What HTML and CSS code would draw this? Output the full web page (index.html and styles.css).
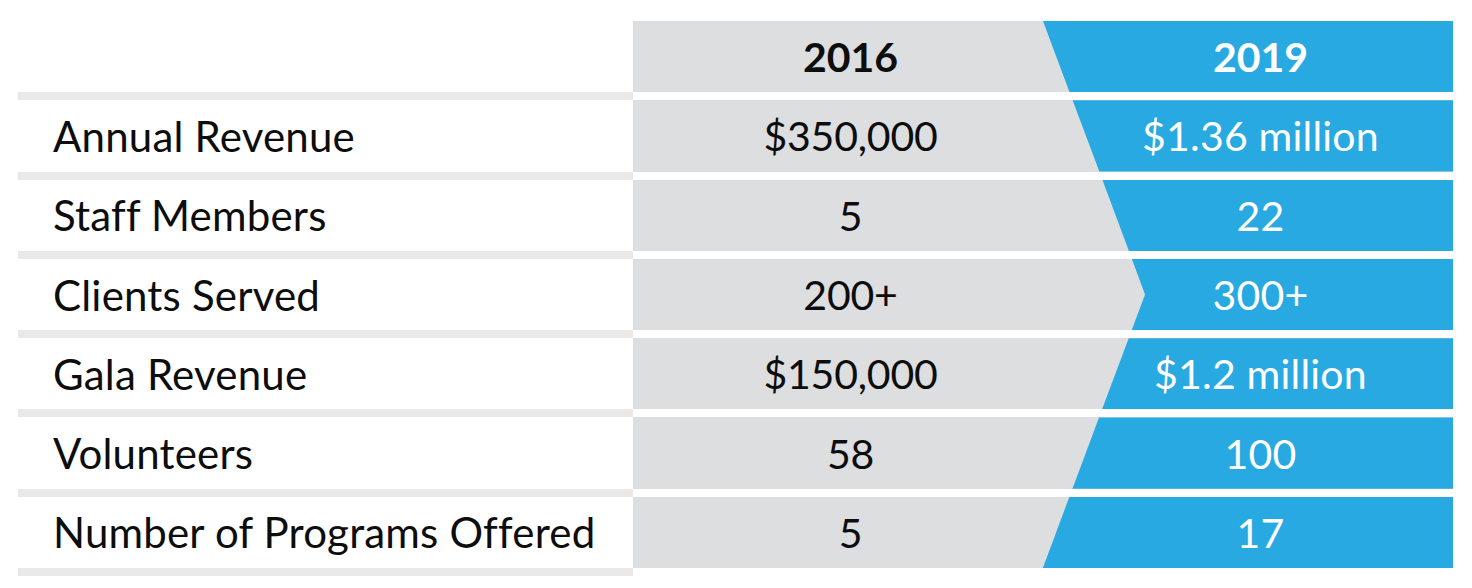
FILE: index.html
```html
<!DOCTYPE html>
<html lang="en">
<head>
<meta charset="utf-8">
<title>2016 vs 2019</title>
<link rel="stylesheet" href="styles.css">
</head>
<body>
<div class="table">
  <div class="row head">
    <div class="label"></div>
    <div class="values" style="--a:410px;--m:423.3px;--b:436.6px">
      <div class="cell y2016">2016</div>
      <div class="cell y2019">2019</div>
    </div>
  </div>
  <div class="body">
    <div class="row">
      <div class="label">Annual Revenue</div>
      <div class="values" style="--a:439.6px;--m:453px;--b:466.3px">
        <div class="cell y2016">$350,000</div>
        <div class="cell y2019">$1.36 million</div>
      </div>
    </div>
    <div class="row">
      <div class="label">Staff Members</div>
      <div class="values" style="--a:469.3px;--m:482.6px;--b:495.9px">
        <div class="cell y2016">5</div>
        <div class="cell y2019">22</div>
      </div>
    </div>
    <div class="row">
      <div class="label">Clients Served</div>
      <div class="values" style="--a:498.9px;--m:512px;--b:498.7px">
        <div class="cell y2016">200+</div>
        <div class="cell y2019">300+</div>
      </div>
    </div>
    <div class="row">
      <div class="label">Gala Revenue</div>
      <div class="values" style="--a:495.7px;--m:482.4px;--b:469px">
        <div class="cell y2016">$150,000</div>
        <div class="cell y2019">$1.2 million</div>
      </div>
    </div>
    <div class="row">
      <div class="label">Volunteers</div>
      <div class="values" style="--a:466px;--m:452.7px;--b:439.4px">
        <div class="cell y2016">58</div>
        <div class="cell y2019">100</div>
      </div>
    </div>
    <div class="row">
      <div class="label">Number of Programs Offered</div>
      <div class="values" style="--a:436.4px;--m:423.1px;--b:409.8px">
        <div class="cell y2016">5</div>
        <div class="cell y2019">17</div>
      </div>
    </div>
  </div>
</div>
</body>
</html>
```
FILE: styles.css
```css
html, body {
  margin: 0;
  padding: 0;
  background: #ffffff;
}

body {
  font-family: Lato, "Open Sans", sans-serif;
  color: #0d0d0d;
}

.table {
  margin: 21px 0 0 18px;
  width: 1435px;
  display: flex;
  flex-direction: column;
}

.body {
  display: flex;
  flex-direction: column;
  gap: 8px;
  padding: 8px 0;
  background: linear-gradient(#ebe9e8, #ebe9e8) no-repeat 0 0 / 615px 100%;
}

.row {
  display: grid;
  grid-template-columns: 615px 820px;
  height: 71.3px;
}

.label {
  background: #ffffff;
  display: flex;
  align-items: center;
  padding-left: 35px;
  font-size: 42px;
  letter-spacing: 0.2px;
}

.values {
  position: relative;
  display: grid;
  grid-template-columns: 435px 385px;
  background: #dcdee0;
}

.values::before {
  content: "";
  position: absolute;
  inset: 0;
  background: #29a9e1;
  clip-path: polygon(var(--a) 0, 100% 0, 100% 100%, var(--b) 100%, var(--m) 50%);
}

.cell {
  position: relative;
  z-index: 1;
  display: flex;
  align-items: center;
  justify-content: center;
  font-size: 41px;
  letter-spacing: -0.2px;
}

.y2019 {
  color: #ffffff;
  letter-spacing: 0.2px;
}

.head .cell {
  font-weight: 700;
  letter-spacing: 0;
}
```
